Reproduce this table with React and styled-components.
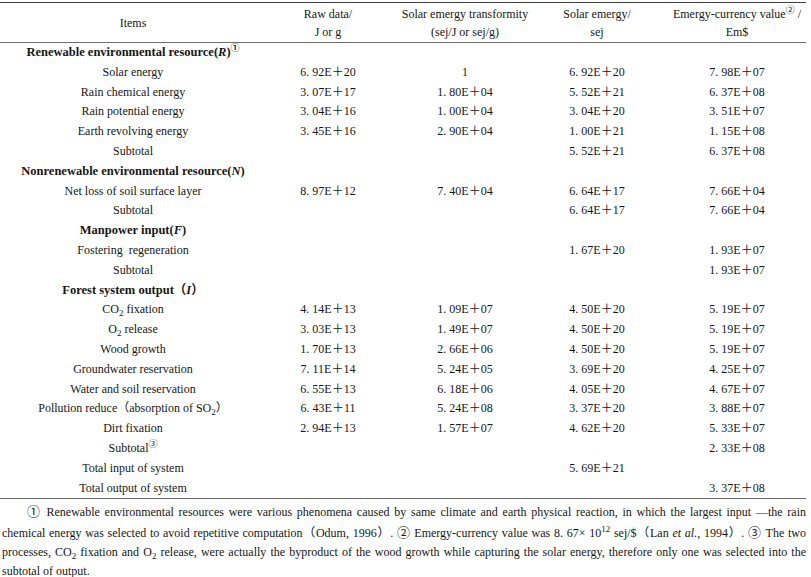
import React from "react";
import styled, { createGlobalStyle } from "styled-components";

const Global = createGlobalStyle`
  html, body { margin: 0; padding: 0; background: #ffffff; }
  body {
    font-family: "Liberation Serif", "Noto Sans CJK SC", serif;
    color: #161616;
    font-size: 12px;
  }
`;

const Page = styled.div`
  width: 806px;
  padding-top: 2px;
`;

const Table = styled.div`
  border-top: 1.5px solid #3f3f3f;
  border-bottom: 1.5px solid #6a6a6a;
`;

const Row = styled.div`
  display: grid;
  grid-template-columns: 266px 124px 150px 114px 152px;
  height: ${(p) => (p.$head ? "39px" : "19.8px")};
  border-bottom: ${(p) => (p.$head ? "1.5px solid #6f6f6f" : "none")};
`;

const Cell = styled.div`
  text-align: center;
  white-space: nowrap;
  line-height: 19.8px;
  font-weight: ${(p) => (p.$bold ? 700 : 400)};
  font-size: ${(p) => (p.$bold ? "12.5px" : "12px")};
  &:nth-child(5) { padding-left: 14px; }
`;

const HeadCell = styled.div`
  display: flex;
  flex-direction: column;
  align-items: center;
  justify-content: center;
  white-space: nowrap;
  line-height: 18px;
  &:nth-child(5) { padding-left: 14px; }
`;

const Sup = styled.sup`
  font-size: 9px;
  line-height: 0;
  vertical-align: 5px;
`;

const Sub = styled.sub`
  font-size: 9px;
  line-height: 0;
  vertical-align: -3px;
`;

const Var = styled.i`
  font-weight: 700;
`;

const Note = styled.p`
  margin: 3px 0 0 2px;
  text-align: justify;
  text-indent: 25px;
  line-height: 19.3px;
  font-size: 12px;
`;

const Circ = styled.span`
  font-size: 13px;
`;

const v = (s) => s.replace("+", "\uFF0B");

const rows = [
  { h: <>Renewable environmental resource(<Var>R</Var>)<Sup>①</Sup></> },
  { n: "Solar energy", d: ["6. 92E+20", "1", "6. 92E+20", "7. 98E+07"] },
  { n: "Rain chemical energy", d: ["3. 07E+17", "1. 80E+04", "5. 52E+21", "6. 37E+08"] },
  { n: "Rain potential energy", d: ["3. 04E+16", "1. 00E+04", "3. 04E+20", "3. 51E+07"] },
  { n: "Earth revolving energy", d: ["3. 45E+16", "2. 90E+04", "1. 00E+21", "1. 15E+08"] },
  { n: "Subtotal", d: ["", "", "5. 52E+21", "6. 37E+08"] },
  { h: <>Nonrenewable environmental resource(<Var>N</Var>)</> },
  { n: "Net loss of soil surface layer", d: ["8. 97E+12", "7. 40E+04", "6. 64E+17", "7. 66E+04"] },
  { n: "Subtotal", d: ["", "", "6. 64E+17", "7. 66E+04"] },
  { h: <>Manpower input(<Var>F</Var>)</> },
  { n: "Fostering\u00A0\u00A0regeneration", d: ["", "", "1. 67E+20", "1. 93E+07"] },
  { n: "Subtotal", d: ["", "", "", "1. 93E+07"] },
  { h: <>Forest system output（<Var>I</Var>）</> },
  { n: <>CO<Sub>2</Sub> fixation</>, d: ["4. 14E+13", "1. 09E+07", "4. 50E+20", "5. 19E+07"] },
  { n: <>O<Sub>2</Sub> release</>, d: ["3. 03E+13", "1. 49E+07", "4. 50E+20", "5. 19E+07"] },
  { n: "Wood growth", d: ["1. 70E+13", "2. 66E+06", "4. 50E+20", "5. 19E+07"] },
  { n: "Groundwater reservation", d: ["7. 11E+14", "5. 24E+05", "3. 69E+20", "4. 25E+07"] },
  { n: "Water and soil reservation", d: ["6. 55E+13", "6. 18E+06", "4. 05E+20", "4. 67E+07"] },
  { n: <>Pollution reduce（absorption of SO<Sub>2</Sub>）</>, d: ["6. 43E+11", "5. 24E+08", "3. 37E+20", "3. 88E+07"] },
  { n: "Dirt fixation", d: ["2. 94E+13", "1. 57E+07", "4. 62E+20", "5. 33E+07"] },
  { n: <>Subtotal<Sup>③</Sup></>, d: ["", "", "", "2. 33E+08"] },
  { n: "Total input of system", d: ["", "", "5. 69E+21", ""] },
  { n: "Total output of system", d: ["", "", "", "3. 37E+08"] },
];

export default function App() {
  return (
    <Page>
      <Global />
      <Table>
        <Row $head>
          <HeadCell>Items</HeadCell>
          <HeadCell>
            <span>Raw data/</span>
            <span>J or g</span>
          </HeadCell>
          <HeadCell>
            <span>Solar emergy transformity</span>
            <span>(sej/J or sej/g)</span>
          </HeadCell>
          <HeadCell>
            <span>Solar emergy/</span>
            <span>sej</span>
          </HeadCell>
          <HeadCell>
            <span>Emergy-currency value<Sup>②</Sup> /</span>
            <span>Em$</span>
          </HeadCell>
        </Row>
        {rows.map((r, i) =>
          r.h ? (
            <Row key={i}>
              <Cell $bold>{r.h}</Cell>
              <Cell />
              <Cell />
              <Cell />
              <Cell />
            </Row>
          ) : (
            <Row key={i}>
              <Cell>{r.n}</Cell>
              {r.d.map((x, j) => (
                <Cell key={j}>{v(x)}</Cell>
              ))}
            </Row>
          )
        )}
      </Table>
      <Note>
        <Circ>①</Circ> Renewable environmental resources were various phenomena caused by same
        climate and earth physical reaction, in which the largest input —the rain chemical energy
        was selected to avoid repetitive computation（Odum, 1996）. <Circ>②</Circ> Emergy-currency
        value was 8. 67× 10<Sup>12</Sup> sej/$（Lan <i>et al.</i>, 1994）. <Circ>③</Circ> The two
        processes, CO<Sub>2</Sub> fixation and O<Sub>2</Sub> release, were actually the byproduct of
        the wood growth while capturing the solar energy, therefore only one was selected into the
        subtotal of output.
      </Note>
    </Page>
  );
}
